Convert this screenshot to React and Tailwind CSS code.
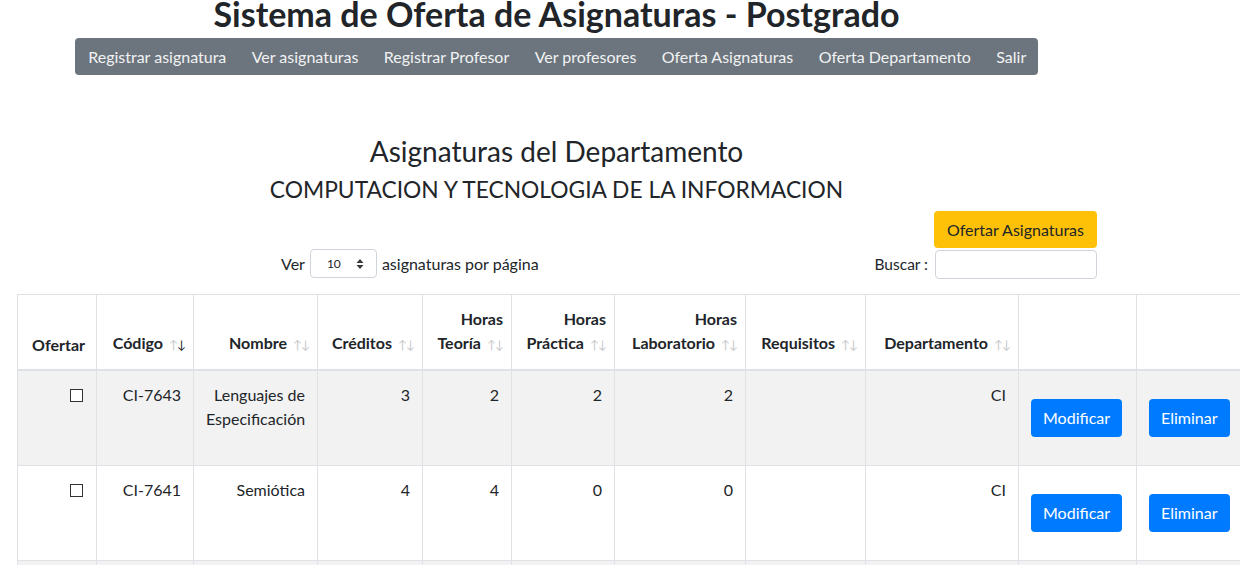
import React from "react";

const font = { fontFamily: "Lato, 'Noto Sans', sans-serif" };

const menu = ["Registrar asignatura", "Ver asignaturas", "Registrar Profesor", "Ver profesores", "Oferta Asignaturas", "Oferta Departamento", "Salir"];

const cols = [
  { lines: ["Ofertar"], w: "w-[79px]", sort: null },
  { lines: ["Código"], w: "w-[97px]", sort: "desc" },
  { lines: ["Nombre"], w: "w-[124px]", sort: "none" },
  { lines: ["Créditos"], w: "w-[105px]", sort: "none" },
  { lines: ["Horas", "Teoría"], w: "w-[89px]", sort: "none" },
  { lines: ["Horas", "Práctica"], w: "w-[103px]", sort: "none" },
  { lines: ["Horas", "Laboratorio"], w: "w-[131px]", sort: "none" },
  { lines: ["Requisitos"], w: "w-[120px]", sort: "none" },
  { lines: ["Departamento"], w: "w-[153px]", sort: "none" },
  { lines: [], w: "w-[118px]", sort: null },
  { lines: [], w: "w-[110px]", sort: null },
];

const filas = [
  { codigo: "CI-7643", nombre: ["Lenguajes de", "Especificación"], creditos: 3, teoria: 2, practica: 2, lab: 2, req: "", dep: "CI" },
  { codigo: "CI-7641", nombre: ["Semiótica"], creditos: 4, teoria: 4, practica: 0, lab: 0, req: "", dep: "CI" },
];

function Flechas({ sort }) {
  return (
    <span className="ml-[6px] inline-block w-[16px] text-left text-[12px] font-normal tracking-[-1px]">
      <span className="text-[#c6c8ca]">↑</span>
      <span className={sort === "desc" ? "text-[#212529]" : "text-[#c6c8ca]"}>↓</span>
    </span>
  );
}

function Boton({ children }) {
  return (
    <button className="my-4 h-[38px] rounded-[4px] bg-[#007bff] px-3 text-base text-white">{children}</button>
  );
}

export default function App() {
  return (
    <div className="h-[565px] w-full overflow-hidden bg-white text-[#212529]" style={font}>
      <div className="ml-[75px] w-[963px]">
        <h1 className="text-center text-[34px] font-bold leading-[28px]">Sistema de Oferta de Asignaturas - Postgrado</h1>
        <nav className="mt-[10px] flex h-[37px] items-center rounded-[4px] bg-[#6c757d] px-[0.5px]">
          {menu.map((m) => (
            <a key={m} className="whitespace-nowrap px-[12.7px] pt-[1px] text-base text-[#f1f2f3]">{m}</a>
          ))}
        </nav>
        <div className="mt-[59px] text-center">
          <h3 className="text-[28px] leading-[34px]">Asignaturas del Departamento</h3>
          <h4 className="mt-[7px] text-[22.8px] leading-[29px]">COMPUTACION Y TECNOLOGIA DE LA INFORMACION</h4>
        </div>
      </div>

      <div className="mt-[7px] flex items-end justify-between pl-[281px] pr-[143px]">
        <div className="mb-[1px] flex items-center text-base">
          <span>Ver</span>
          <div className="mx-[5px] flex h-[29px] w-[67px] items-center justify-between rounded-[4px] border border-[#ced4da] pl-[16px] pr-[12px]">
            <span className="text-[12px]">10</span>
            <svg width="8" height="12" viewBox="0 0 8 12"><path d="M4 1 L7.5 5 H0.5 Z M4 11 L0.5 7 H7.5 Z" fill="#343a40" /></svg>
          </div>
          <span>asignaturas por página</span>
        </div>
        <div className="flex flex-col items-end">
          <button className="h-[37px] rounded-[4px] bg-[#ffc107] px-[13px] text-base text-[#212529]">Ofertar Asignaturas</button>
          <div className="mt-[2px] flex items-center">
            <span className="mr-[7px] text-[15.5px]">Buscar :</span>
            <div className="h-[29px] w-[162px] rounded-[4px] border border-[#ced4da] bg-white" />
          </div>
        </div>
      </div>

      <table className="ml-[17px] mt-[15px] w-[1229px] table-fixed border-collapse text-base">
        <thead>
          <tr className="border-t border-[#dee2e6]">
            {cols.map((c, i) => (
              <th key={i} className={`${c.w} border-x border-b-2 border-[#dee2e6] pb-[12px] pl-3 pt-3 text-right align-bottom font-bold leading-6 ${c.sort ? "pr-[8px]" : "pr-[11px]"}`}>
                {c.lines.map((l, j) => (
                  <div key={j} className="whitespace-nowrap">
                    {l}
                    {j === c.lines.length - 1 && c.sort && <Flechas sort={c.sort} />}
                  </div>
                ))}
              </th>
            ))}
          </tr>
        </thead>
        <tbody>
          {filas.map((f, i) => (
            <tr key={f.codigo} className={i % 2 === 0 ? "bg-[#f2f2f2]" : "bg-white"}>
              <td className="border border-[#dee2e6] p-3 pr-[13px] text-right align-top">
                <span className="mt-[6px] inline-block h-[13px] w-[13px] border border-[#333] bg-white" />
              </td>
              <td className="border border-[#dee2e6] p-3 text-right align-top leading-6">{f.codigo}</td>
              <td className="border border-[#dee2e6] p-3 text-right align-top leading-6">
                {f.nombre.map((n) => (
                  <div key={n}>{n}</div>
                ))}
              </td>
              <td className="border border-[#dee2e6] p-3 text-right align-top leading-6">{f.creditos}</td>
              <td className="border border-[#dee2e6] p-3 text-right align-top leading-6">{f.teoria}</td>
              <td className="border border-[#dee2e6] p-3 text-right align-top leading-6">{f.practica}</td>
              <td className="border border-[#dee2e6] p-3 text-right align-top leading-6">{f.lab}</td>
              <td className="border border-[#dee2e6] p-3 text-right align-top leading-6">{f.req}</td>
              <td className="border border-[#dee2e6] p-3 text-right align-top leading-6">{f.dep}</td>
              <td className="border border-[#dee2e6] p-3 text-left align-top">
                <Boton>Modificar</Boton>
              </td>
              <td className="border border-[#dee2e6] p-3 text-left align-top">
                <Boton>Eliminar</Boton>
              </td>
            </tr>
          ))}
          <tr className="bg-[#f2f2f2]">
            {cols.map((c, i) => (
              <td key={i} className="h-[94px] border border-[#dee2e6]" />
            ))}
          </tr>
        </tbody>
      </table>
    </div>
  );
}
